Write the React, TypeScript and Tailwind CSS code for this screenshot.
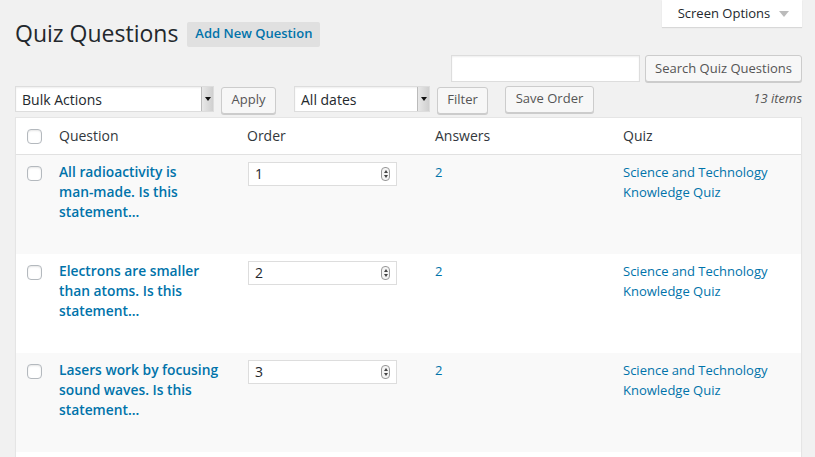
const ROWS = [
  { id: 1, title: ['All radioactivity is', 'man-made. Is this', 'statement...'], order: '1', answers: '2' },
  { id: 2, title: ['Electrons are smaller', 'than atoms. Is this', 'statement...'], order: '2', answers: '2' },
  { id: 3, title: ['Lasers work by focusing', 'sound waves. Is this', 'statement...'], order: '3', answers: '2' },
]

function Checkbox() {
  return (
    <span className="block h-[15px] w-[15px] rounded-[4px] border border-[#b4b9be] bg-white shadow-[inset_0_1px_2px_rgba(0,0,0,0.1)]" />
  )
}

function Button({ children, className = '' }: { children: React.ReactNode; className?: string }) {
  return (
    <button className={`flex h-[27px] items-center rounded-[3px] border border-[#cccccc] bg-[#f7f7f7] px-[9px] text-[13px] text-[#555555] shadow-[0_1px_0_#cccccc] ${className}`}>
      {children}
    </button>
  )
}

function Select({ label, width }: { label: string; width: string }) {
  return (
    <div className={`flex h-[26px] items-center justify-between border border-[#dddddd] bg-white pl-[6px] shadow-[inset_0_1px_2px_rgba(0,0,0,0.07)] ${width}`}>
      <span className="text-[14px] text-[#23282d]">{label}</span>
      <span className="flex h-full w-[12px] items-center justify-center border-l border-[#bbbbbb] bg-gradient-to-r from-[#e8e8e8] to-[#cfcfcf]">
        <span className="h-0 w-0 border-x-[3px] border-t-[4px] border-x-transparent border-t-[#111111]" />
      </span>
    </div>
  )
}

function Spinner() {
  return (
    <span className="flex h-[14px] w-[9px] flex-col items-center justify-center gap-[2px] rounded-[4px] border border-[#999999] bg-[#f4f4f4]">
      <span className="h-0 w-0 border-x-[2px] border-b-[3px] border-x-transparent border-b-[#444444]" />
      <span className="h-0 w-0 border-x-[2px] border-t-[3px] border-x-transparent border-t-[#444444]" />
    </span>
  )
}

export default function App() {
  return (
    <div className="h-[457px] w-[815px] overflow-hidden bg-[#f1f1f1] font-['Open_Sans',sans-serif] text-[#23282d]">
      {/* Screen options tab */}
      <div className="flex justify-end pr-[13px]">
        <div className="flex h-[27px] w-[140px] items-center justify-center gap-[9px] bg-white pl-[3px] text-[13px] text-[#23282d] shadow-[0_1px_1px_rgba(0,0,0,0.1)]">
          Screen Options
          <span className="h-0 w-0 border-x-[5px] border-t-[6px] border-x-transparent border-t-[#bbbbbb]" />
        </div>
      </div>

      <div className="px-[15px] pr-[13px]">
        {/* Title */}
        <div className="-mt-[8px] flex items-center gap-[9px]">
          <h1 className="text-[23px] leading-[29px] font-normal text-[#23282d]">Quiz Questions</h1>
          <span className="mt-[1px] flex h-[25px] items-center rounded-[2px] bg-[#e0e0e0] px-[8px] text-[13px] font-semibold text-[#0073aa]">
            Add New Question
          </span>
        </div>

        {/* Search */}
        <div className="mt-[7px] flex justify-end gap-[5px]">
          <div className="h-[27px] w-[189px] border border-[#dddddd] bg-white shadow-[inset_0_1px_2px_rgba(0,0,0,0.07)]" />
          <Button className="w-[157px] justify-center">Search Quiz Questions</Button>
        </div>

        {/* Tablenav */}
        <div className="mt-[3px] flex h-[28px] items-center">
          <Select label="Bulk Actions" width="w-[199px]" />
          <Button className="ml-[7px] mt-[2px] w-[55px] justify-center">Apply</Button>
          <Select label="All dates" width="ml-[18px] w-[136px]" />
          <Button className="ml-[7px] mt-[2px] w-[51px] justify-center">Filter</Button>
          <Button className="ml-[17px] w-[89px] justify-center">Save Order</Button>
          <span className="ml-auto text-[13px] italic text-[#555555]">13 items</span>
        </div>

        {/* Table */}
        <div className="mt-[4px] border border-[#e5e5e5] bg-white shadow-[0_1px_1px_rgba(0,0,0,0.04)]">
          <div className="grid h-[37px] grid-cols-[43px_188px_188px_188px_1fr] items-center border-b border-[#e1e1e1] text-[14px] text-[#32373c]">
            <div className="flex pl-[11px]"><Checkbox /></div>
            <div className="-mt-px">Question</div>
            <div className="-mt-px">Order</div>
            <div className="-mt-px">Answers</div>
            <div className="-mt-px">Quiz</div>
          </div>
          {ROWS.map((row, i) => (
            <div
              key={row.id}
              className={`grid h-[99px] grid-cols-[43px_188px_188px_188px_1fr] items-start pt-[7px] text-[13px] leading-[20px] ${i % 2 === 0 ? 'bg-[#f9f9f9]' : 'bg-white'}`}
            >
              <div className="flex pl-[11px] pt-[4px]"><Checkbox /></div>
              <div className="text-[13.8px] font-semibold text-[#0073aa]">
                {row.title.map((line) => (
                  <div key={line}>{line}</div>
                ))}
              </div>
              <div className="pl-px">
                <div className="flex h-[24px] w-[149px] items-center justify-between border border-[#dddddd] bg-white pl-[6px] pr-[6px] text-[14px] text-[#23282d]">
                  {row.order}
                  <Spinner />
                </div>
              </div>
              <div className="text-[#0073aa]">{row.answers}</div>
              <div className="text-[#0073aa]">
                <div>Science and Technology</div>
                <div>Knowledge Quiz</div>
              </div>
            </div>
          ))}
          <div className="h-[20px] bg-white" />
        </div>
      </div>
    </div>
  )
}
